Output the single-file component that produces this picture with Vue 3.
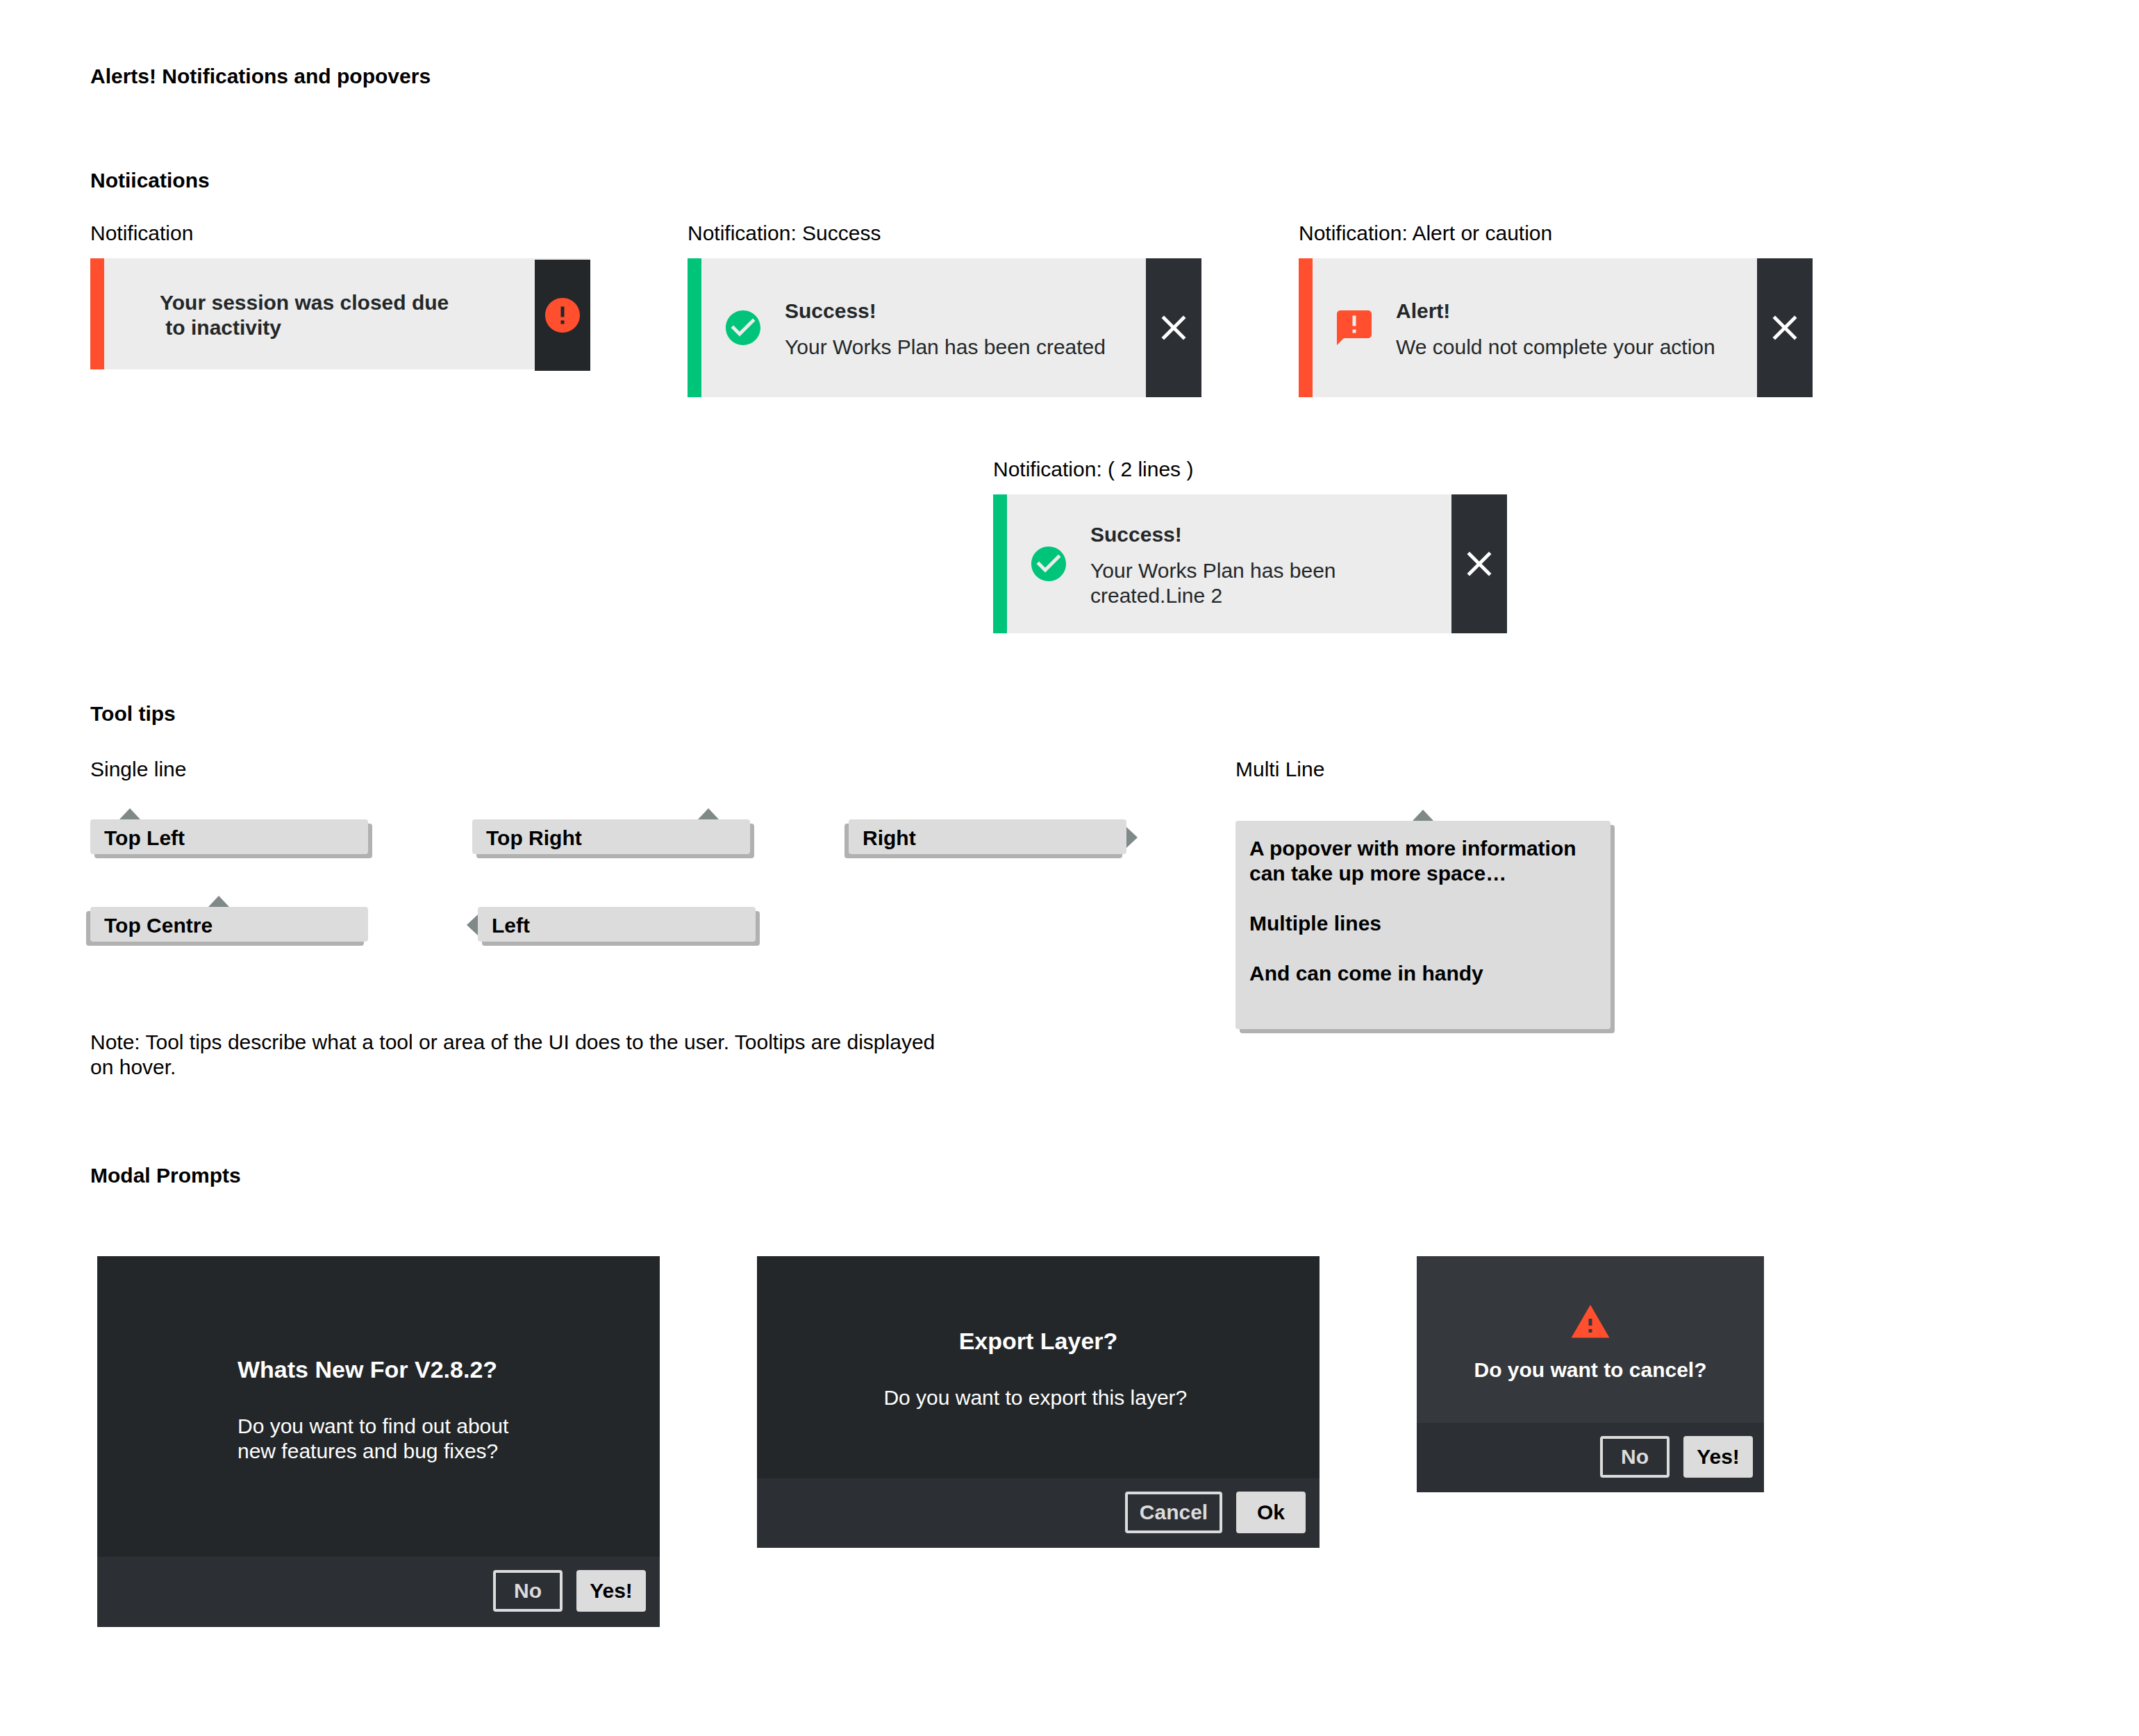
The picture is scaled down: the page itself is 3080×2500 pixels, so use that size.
<script setup>
const notices = [
  {
    caption: 'Notification: Success',
    tone: 'success',
    title: 'Success!',
    text: 'Your Works Plan has been created',
  },
  {
    caption: 'Notification: Alert or caution',
    tone: 'alert',
    title: 'Alert!',
    text: 'We could not complete your action',
  },
  {
    caption: 'Notification: ( 2 lines )',
    tone: 'success',
    title: 'Success!',
    text: 'Your Works Plan has been\ncreated.Line 2',
    wide: true,
  },
]

const tooltips = [
  { label: 'Top Left', pointer: 'top-left', shadow: 'right' },
  { label: 'Top Right', pointer: 'top-right', shadow: 'right' },
  { label: 'Right', pointer: 'right', shadow: 'left' },
  { label: 'Top Centre', pointer: 'top-centre', shadow: 'left' },
  { label: 'Left', pointer: 'left', shadow: 'right' },
]
</script>

<template>
  <main class="page">
    <h1 class="heading">Alerts! Notifications and popovers</h1>

    <section class="section section--notices">
      <h2 class="heading">Notiications</h2>
      <div class="notices">
        <div class="sample">
          <p class="caption">Notification</p>
          <div class="notice notice--session notice--alert" role="status">
            <p class="session-text">Your session was closed due<br />&nbsp;to inactivity</p>
            <div class="notice-badge">
              <svg class="icon" viewBox="0 0 24 24" aria-hidden="true">
                <path d="M12 2C6.480 2 2 6.480 2 12s4.480 10 10 10 10-4.480 10-10S17.520 2 12 2zm1 15h-2v-2h2v2zm0-4h-2V7h2v6z" />
              </svg>
            </div>
          </div>
        </div>

        <div
          v-for="item in notices"
          :key="item.caption"
          class="sample"
          :class="{ 'sample--wide': item.wide }"
        >
          <p class="caption">{{ item.caption }}</p>
          <div class="notice" :class="'notice--' + item.tone" role="alert">
            <svg class="icon" viewBox="0 0 24 24" aria-hidden="true">
              <path
                v-if="item.tone === 'success'"
                d="M12 2C6.480 2 2 6.480 2 12s4.480 10 10 10 10-4.480 10-10S17.520 2 12 2zm-2 15l-5-5 1.410-1.410L10 14.170l7.590-7.590L19 8l-9 9z"
              />
              <path
                v-else
                d="M20 2H4c-1.100 0-1.990.9-1.990 2L2 22l4-4h14c1.100 0 2-.9 2-2V4c0-1.100-.9-2-2-2zm-7 13h-2v-2h2v2zm0-4h-2V5h2v6z"
              />
            </svg>
            <div class="notice-copy">
              <h3 class="notice-title">{{ item.title }}</h3>
              <p class="notice-text">{{ item.text }}</p>
            </div>
            <button class="notice-close" type="button" aria-label="Dismiss">
              <svg class="icon" viewBox="0 0 24 24" aria-hidden="true">
                <path d="M19 6.410L17.590 5 12 10.590 6.410 5 5 6.410 10.590 12 5 17.590 6.410 19 12 13.410 17.590 19 19 17.590 13.410 12z" />
              </svg>
            </button>
          </div>
        </div>
      </div>
    </section>

    <section class="section section--tips">
      <h2 class="heading">Tool tips</h2>
      <div class="tips">
        <div class="tips-single">
          <p class="caption">Single line</p>
          <div class="tip-grid">
            <div
              v-for="tip in tooltips"
              :key="tip.label"
              class="tip"
              :class="['tip--' + tip.pointer, 'tip--shadow-' + tip.shadow]"
              role="tooltip"
            >
              {{ tip.label }}
            </div>
          </div>
          <p class="note">
            Note: Tool tips describe what a tool or area of the UI does to the user. Tooltips are
            displayed on hover.
          </p>
        </div>
        <div class="tips-multi">
          <p class="caption">Multi Line</p>
          <div class="tip tip--multi tip--shadow-right" role="tooltip">
            <p>A popover with more information can take up more space…</p>
            <p>Multiple lines</p>
            <p>And can come in handy</p>
          </div>
        </div>
      </div>
    </section>

    <section class="section section--modals">
      <h2 class="heading">Modal Prompts</h2>
      <div class="modals">
        <div class="modal modal--news" role="dialog" aria-labelledby="news-title">
          <div class="modal-body">
            <h3 id="news-title" class="modal-title">Whats New For V2.8.2?</h3>
            <p>Do you want to find out about new features and bug fixes?</p>
          </div>
          <div class="modal-footer">
            <button class="btn btn--outline" type="button">No</button>
            <button class="btn btn--solid" type="button">Yes!</button>
          </div>
        </div>

        <div class="modal modal--export" role="dialog" aria-labelledby="export-title">
          <div class="modal-body">
            <h3 id="export-title" class="modal-title">Export Layer?</h3>
            <p>Do you want to export this layer?&nbsp;</p>
          </div>
          <div class="modal-footer">
            <button class="btn btn--outline btn--wide" type="button">Cancel</button>
            <button class="btn btn--solid" type="button">Ok</button>
          </div>
        </div>

        <div class="modal modal--cancel" role="alertdialog" aria-labelledby="cancel-title">
          <div class="modal-body">
            <svg class="icon" viewBox="0 0 24 24" aria-hidden="true">
              <path d="M1 21h22L12 2 1 21zm12-3h-2v-2h2v2zm0-4h-2v-4h2v4z" />
            </svg>
            <h3 id="cancel-title">Do you want to cancel?</h3>
          </div>
          <div class="modal-footer">
            <button class="btn btn--outline" type="button">No</button>
            <button class="btn btn--solid" type="button">Yes!</button>
          </div>
        </div>
      </div>
    </section>
  </main>
</template>

<style>
body {
  margin: 0;
  background: #fff;
}
</style>

<style scoped>
.page {
  box-sizing: border-box;
  padding: 92px 130px 156px;
  font-family: "Liberation Sans", Arial, Helvetica, sans-serif;
  font-size: 30px;
  line-height: 36px;
  color: #000;
}

h1,
h2,
h3,
p {
  margin: 0;
  font-size: inherit;
}

.section--notices {
  margin-top: 114px;
}

.section--tips {
  margin-top: 98px;
}

.section--modals {
  margin-top: 120px;
}

.icon {
  display: block;
  flex: none;
  width: 60px;
  height: 60px;
  fill: currentColor;
}

/* Notifications */
.notices {
  display: grid;
  grid-template-columns: 720px 740px 740px;
  gap: 86px 140px;
  margin-top: 40px;
}

.caption {
  margin-bottom: 18px;
}

.sample--wide {
  grid-column: 2 / 4;
  justify-self: center;
  width: 740px;
}

.notice {
  display: flex;
  align-items: center;
  box-sizing: border-box;
  min-height: 200px;
  padding-left: 30px;
  border-left: 20px solid;
  background: #ececec;
}

.notice--success {
  border-color: #00c47a;
  color: #00c47a;
}

.notice--alert {
  border-color: #ff4f2e;
  color: #ff4f2e;
}

.notice-copy {
  flex: 1;
  padding: 4px 0 0 30px;
  color: #232729;
}

.notice-title {
  margin-bottom: 16px;
}

.notice-text {
  white-space: pre;
}

.notice-close {
  display: grid;
  place-items: center;
  align-self: stretch;
  width: 80px;
  padding: 0;
  border: 0;
  background: #2c2f34;
  color: #fff;
}

.notice--session {
  min-height: 160px;
  padding-left: 80px;
}

.session-text {
  flex: 1;
  padding-top: 4px;
  font-weight: bold;
  color: #232729;
}

.notice-badge {
  display: grid;
  place-items: center;
  align-self: stretch;
  width: 80px;
  margin: 2px 0 -2px;
  background: #232729;
}

/* Tool tips */
.tips {
  display: flex;
  gap: 157px;
  margin-top: 44px;
}

.tips-single {
  width: 1492px;
}

.tips-multi {
  width: 540px;
}

.tips .caption {
  margin-bottom: 54px;
}

.tip-grid {
  display: grid;
  grid-template-columns: 550px 542px 400px;
  row-gap: 76px;
}

.tip {
  position: relative;
  box-sizing: border-box;
  width: 400px;
  padding: 9px 20px 5px;
  border-radius: 4px;
  background: #dcdcdc;
  font-weight: bold;
}

.tip--shadow-right {
  box-shadow: 6px 6px 0 #b1b1b1;
}

.tip--shadow-left {
  box-shadow: -6px 6px 0 #b1b1b1;
}

.tip::before {
  content: "";
  position: absolute;
  bottom: 100%;
  width: 30px;
  height: 16px;
  background: #7f8988;
  clip-path: polygon(50% 0, 100% 100%, 0 100%);
}

.tip--top-left::before {
  left: 42px;
}

.tip--top-right::before {
  right: 45px;
}

.tip--top-centre::before {
  left: 170px;
}

.tip--left {
  margin-left: 8px;
}

.tip--left::before,
.tip--right::before {
  top: 11px;
  bottom: auto;
  width: 16px;
  height: 30px;
}

.tip--left::before {
  right: 100%;
  clip-path: polygon(0 50%, 100% 0, 100% 100%);
}

.tip--right::before {
  left: 100%;
  clip-path: polygon(0 0, 100% 50%, 0 100%);
}

.tip--multi {
  display: flex;
  flex-direction: column;
  gap: 36px;
  width: 540px;
  min-height: 300px;
  margin-top: 56px;
  padding: 22px 20px;
}

.tip--multi::before {
  left: 255px;
}

.note {
  max-width: 1240px;
  margin-top: 127px;
}

/* Modal prompts */
.modals {
  display: flex;
  align-items: flex-start;
  gap: 140px;
  margin: 98px 0 0 10px;
}

.modal {
  width: 810px;
  background: #2c2f34;
  color: #fff;
}

.modal-body {
  box-sizing: border-box;
  background: #232729;
}

.modal-title {
  margin-bottom: 43px;
  font-size: 34px;
  line-height: 42px;
}

.modal--news .modal-body {
  min-height: 433px;
  padding: 142px 202px 0;
}

.modal--news {
  border-bottom: 1px solid #232729;
}

.modal--export .modal-body {
  min-height: 320px;
  padding-top: 101px;
  text-align: center;
}

.modal--cancel {
  width: 500px;
}

.modal--cancel .modal-body {
  display: flex;
  flex-direction: column;
  align-items: center;
  gap: 21px;
  min-height: 240px;
  padding-top: 65px;
  background: #35383c;
}

.modal--cancel .icon {
  color: #ff4f2e;
}

.modal-footer {
  display: flex;
  justify-content: flex-end;
  gap: 20px;
  padding: 19px 20px 21px;
}

.modal--cancel .modal-footer {
  padding-right: 16px;
}

.btn {
  box-sizing: border-box;
  min-width: 100px;
  height: 60px;
  padding: 0 12px;
  border: 4px solid #dcdcdc;
  border-radius: 4px;
  font: inherit;
  font-weight: bold;
}

.btn--wide {
  min-width: 140px;
}

.btn--outline {
  background: transparent;
  color: #dcdcdc;
}

.btn--solid {
  background: #dcdcdc;
  color: #000;
}
</style>
